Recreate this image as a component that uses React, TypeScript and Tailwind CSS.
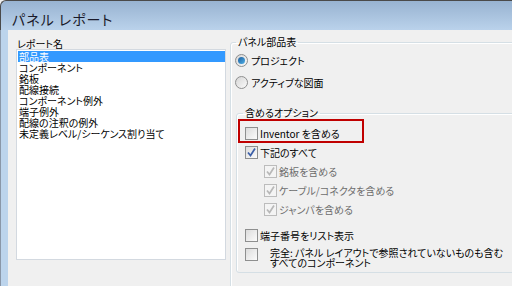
import React from "react";

const reports = [
    "部品表",
    "コンポーネント",
    "銘板",
    "配線接続",
    "コンポーネント例外",
    "端子例外",
    "配線の注釈の例外",
    "未定義レベル/シーケンス割り当て",
];

function Check({ checked = false, disabled = false }: { checked?: boolean; disabled?: boolean }) {
    return (
        <span
            className={`flex h-[13px] w-[13px] shrink-0 items-center justify-center border ${
                disabled ? "border-[#bcbcbc] bg-[#f4f4f4]" : "border-[#8e8f8f] bg-gradient-to-br from-[#dcdcdc] to-[#fbfbfb]"
            }`}
        >
            {checked && (
                <svg width="9" height="9" viewBox="0 0 9 9">
                    <path
                        d="M1 4.5 L3.5 7.5 L8 0.5"
                        fill="none"
                        stroke={disabled ? "#b8b8b8" : "#3c5fa8"}
                        strokeWidth="1.7"
                    />
                </svg>
            )}
        </span>
    );
}

function Radio({ checked = false }: { checked?: boolean }) {
    return (
        <span className="flex h-[13px] w-[13px] shrink-0 items-center justify-center rounded-full border border-[#8e8f8f] bg-gradient-to-br from-[#d6d6d6] to-[#fafafa]">
            {checked && <span className="h-[7px] w-[7px] rounded-full bg-gradient-to-br from-[#1f5e9c] to-[#4fb0e8]" />}
        </span>
    );
}

export default function App() {
    return (
        <div className="flex h-[286px] w-[512px] flex-col overflow-hidden bg-[#f0f0f0] text-[10px] leading-[11px] text-black [font-family:'Noto_Sans_CJK_JP',sans-serif] [font-feature-settings:'palt']">
            {/* title bar */}
            <div className="h-[30px] shrink-0 rounded-tl-[6px] border-l border-t border-[#4a4a4a] bg-gradient-to-b from-[#98b3d1] to-[#bad2eb] pl-[11px] pt-[10px]">
                <span className="text-[14px] leading-[16px] tracking-[1px] text-[#1a1a2a]">パネル レポート</span>
            </div>

            <div className="flex flex-1">
                <div className="w-[8px] shrink-0 border-l border-[#8a97a8] bg-[#bcd4ec]" />

                <div className="flex flex-1 bg-[#f0f0f0] pl-[8px]">
                    {/* report list */}
                    <div className="flex w-[210px] shrink-0 flex-col pt-[8px]">
                        <div className="pl-[1px]">レポート名</div>
                        <div className="h-[211px] border border-[#d3d9e0] bg-white pl-[1px] pt-[1px]">
                            {reports.map((r, i) => (
                                <div
                                    key={r}
                                    className={`h-[11px] pl-[1px] ${i === 0 ? "bg-[#3399ff] text-white" : ""}`}
                                >
                                    {r}
                                </div>
                            ))}
                        </div>
                    </div>

                    {/* options */}
                    <div className="ml-[4px] pt-[6px]">
                        <fieldset className="h-[260px] w-[320px] rounded-[3px] border border-[#d5dfe5] shadow-[inset_1px_1px_0_#fff]">
                            <legend className="ml-[5px] px-[2px] leading-[12px]">パネル部品表</legend>

                            <div className="flex flex-col gap-[9px] pl-[4px] pt-[6px]">
                                <div className="flex items-center gap-[3px]">
                                    <Radio checked />
                                    <span>プロジェクト</span>
                                </div>
                                <div className="flex items-center gap-[3px]">
                                    <Radio />
                                    <span>アクティブな図面</span>
                                </div>
                            </div>

                            <fieldset className="ml-[5px] mt-[18px] h-[166px] w-[300px] rounded-[3px] border border-[#d5dfe5] shadow-[inset_1px_1px_0_#fff]">
                                <legend className="ml-[6px] px-[2px] leading-[12px]">含めるオプション</legend>

                                <div className="ml-[1px] flex h-[24px] w-[126px] items-center border-2 border-[#c00000] pl-[5px] pt-[4px]">
                                    <Check />
                                    <span className="ml-[2px]">Inventor を含める</span>
                                </div>

                                <div className="flex flex-col gap-[6px] pl-[8px] pt-[3px]">
                                    <div className="flex items-center gap-[2px]">
                                        <Check checked />
                                        <span>下記のすべて</span>
                                    </div>
                                    <div className="flex items-center gap-[2px] pl-[19px] text-[#6d6d6d]">
                                        <Check checked disabled />
                                        <span>銘板を含める</span>
                                    </div>
                                    <div className="flex items-center gap-[2px] pl-[19px] text-[#6d6d6d]">
                                        <Check checked disabled />
                                        <span>ケーブル/コネクタを含める</span>
                                    </div>
                                    <div className="flex items-center gap-[2px] pl-[19px] text-[#6d6d6d]">
                                        <Check checked disabled />
                                        <span>ジャンパを含める</span>
                                    </div>
                                    <div className="mt-[7px] flex items-center gap-[2px]">
                                        <Check />
                                        <span>端子番号をリスト表示</span>
                                    </div>
                                    <div className="flex items-start gap-[12px]">
                                        <Check />
                                        <span className="leading-[10px]">
                                            完全: パネル レイアウトで参照されていないものも含む
                                            <br />
                                            すべてのコンポーネント
                                        </span>
                                    </div>
                                </div>
                            </fieldset>
                        </fieldset>
                    </div>
                </div>
            </div>
        </div>
    );
}
